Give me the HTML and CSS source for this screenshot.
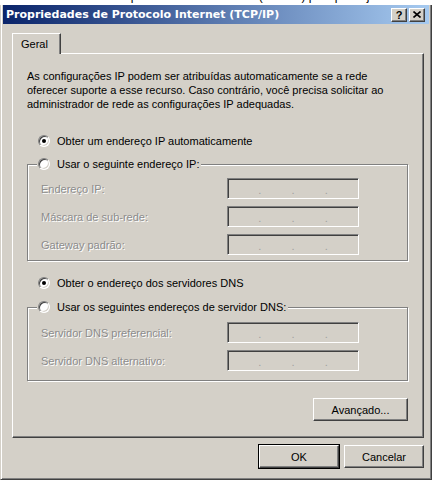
FILE: index.html
```html
<!DOCTYPE html>
<html lang="pt-BR">
<head>
    <meta charset="UTF-8">
    <title>Propriedades de Protocolo Internet (TCP/IP)</title>
    <link rel="stylesheet" href="styles.css">
</head>
<body>
    <div class="backdrop">
        <div class="backdrop-text">Conexão ao Propriedades de rede local (TCP/IP) pela placa ja</div>
    </div>

    <div class="window">
        <div class="titlebar">
            <span class="title">Propriedades de Protocolo Internet (TCP/IP)</span>
            <div class="caption-buttons">
                <button class="cap-btn">?</button>
                <button class="cap-btn">
                    <svg width="8" height="7" viewBox="0 0 8 7"><path d="M0.5 0.5 L7.5 6.5 M7.5 0.5 L0.5 6.5" stroke="#000" stroke-width="1.6" fill="none"/></svg>
                </button>
            </div>
        </div>

        <div class="content">
            <div class="tabs">
                <div class="tab">Geral</div>
            </div>

            <div class="panel">
                <p class="intro">As configurações IP podem ser atribuídas automaticamente se a rede<br>oferecer suporte a esse recurso. Caso contrário, você precisa solicitar ao<br>administrador de rede as configurações IP adequadas.</p>

                <label class="option first"><span class="radio checked"></span>Obter um endereço IP automaticamente</label>

                <div class="group group-ip">
                    <label class="option legend"><span class="radio"></span>Usar o seguinte endereço IP:</label>
                    <div class="fields">
                        <span class="field-label">Endereço IP:</span>
                        <span class="ip-field"><i>.</i><i>.</i><i>.</i></span>
                        <span class="field-label">Máscara de sub-rede:</span>
                        <span class="ip-field"><i>.</i><i>.</i><i>.</i></span>
                        <span class="field-label">Gateway padrão:</span>
                        <span class="ip-field"><i>.</i><i>.</i><i>.</i></span>
                    </div>
                </div>

                <label class="option dns-auto"><span class="radio checked"></span>Obter o endereço dos servidores DNS</label>

                <div class="group group-dns">
                    <label class="option legend"><span class="radio"></span>Usar os seguintes endereços de servidor DNS:</label>
                    <div class="fields">
                        <span class="field-label">Servidor DNS preferencial:</span>
                        <span class="ip-field"><i>.</i><i>.</i><i>.</i></span>
                        <span class="field-label">Servidor DNS alternativo:</span>
                        <span class="ip-field"><i>.</i><i>.</i><i>.</i></span>
                    </div>
                </div>

                <div class="advanced-row">
                    <button class="btn btn-advanced">Avançado...</button>
                </div>
            </div>

            <div class="footer">
                <button class="btn default">OK</button>
                <button class="btn">Cancelar</button>
            </div>
        </div>
    </div>
</body>
</html>
```

FILE: styles.css
```css
body {
    margin: 0;
    background-color: #fff;
    font-family: "Liberation Sans", Arial, sans-serif;
    font-size: 11px;
    color: #000;
}
.backdrop {
    height: 5px;
    overflow: hidden;
}
.backdrop-text {
    margin-top: -11px;
    padding-left: 44px;
    font-size: 12px;
    line-height: 14px;
    white-space: nowrap;
}
.window {
    width: 432px;
    height: 475px;
    box-sizing: border-box;
    background-color: #d4d0c8;
    border-left: 1px solid #d4d0c8;
    border-right: 1px solid #404040;
    border-bottom: 1px solid #404040;
    box-shadow: inset 1px 0 0 #fff, inset -1px -1px 0 #808080;
    padding: 0 2px;
}
.titlebar {
    height: 19px;
    display: flex;
    align-items: center;
    justify-content: space-between;
    background: linear-gradient(to right, #0a246a, #a6caf0);
    padding: 0 4px 0 3px;
}
.title {
    color: #fff;
    font-family: "DejaVu Sans", Verdana, sans-serif;
    font-weight: bold;
    font-size: 11px;
    white-space: nowrap;
}
.caption-buttons {
    display: flex;
    gap: 2px;
}
.cap-btn {
    width: 16px;
    height: 14px;
    padding: 0;
    display: flex;
    align-items: center;
    justify-content: center;
    background-color: #d4d0c8;
    border: 1px solid;
    border-color: #fff #404040 #404040 #fff;
    box-shadow: inset -1px -1px 0 #808080;
    font-family: "Liberation Sans", Arial, sans-serif;
    font-weight: bold;
    font-size: 11px;
    line-height: 12px;
    color: #000;
}
.content {
    padding: 9px 5px 0 9px;
}
.tabs {
    display: flex;
    height: 20px;
}
.tab {
    position: relative;
    z-index: 1;
    width: 49px;
    height: 21px;
    box-sizing: border-box;
    background-color: #d4d0c8;
    border-top: 1px solid #fff;
    border-left: 1px solid #fff;
    border-right: 1px solid #404040;
    box-shadow: inset -1px 0 0 #808080;
    padding: 3px 0 0 8px;
    line-height: 14px;
}
.panel {
    width: 412px;
    height: 385px;
    box-sizing: border-box;
    border: 1px solid;
    border-color: #fff #404040 #404040 #fff;
    box-shadow: inset -1px -1px 0 #808080;
    padding: 15px 15px 0 14px;
}
.intro {
    margin: 0;
    line-height: 14px;
    white-space: nowrap;
}
.option {
    display: flex;
    align-items: center;
    gap: 7px;
    height: 14px;
    line-height: 14px;
    white-space: nowrap;
}
.option.first {
    margin: 23px 0 0 11px;
}
.option.dns-auto {
    margin: 15px 0 0 11px;
}
.radio {
    flex: none;
    width: 12px;
    height: 12px;
    box-sizing: border-box;
    border-radius: 50%;
    border: 1px solid;
    border-color: #808080 #fff #fff #808080;
    background-color: #fff;
    box-shadow: inset 1px 1px 0 #404040, inset -1px -1px 0 #d4d0c8;
    display: flex;
    align-items: center;
    justify-content: center;
}
.radio.checked::after {
    content: "";
    width: 4px;
    height: 4px;
    border-radius: 50%;
    background-color: #000;
}
.group {
    border: 1px solid #808080;
    box-shadow: 1px 1px 0 #fff, inset 1px 1px 0 #fff;
}
.group-ip {
    margin-top: 16px;
    padding-bottom: 5px;
}
.group-dns {
    margin-top: 17px;
    padding-bottom: 9px;
}
.group .legend {
    width: max-content;
    margin: -8px 0 0 9px;
    padding: 0 2px 0 1px;
    background-color: #d4d0c8;
}
.fields {
    display: grid;
    grid-template-columns: 186px 132px;
    grid-auto-rows: 21px;
    row-gap: 7px;
    align-items: center;
    margin-top: 7px;
    padding-left: 13px;
}
.group-dns .fields {
    margin-top: 8px;
}
.field-label {
    color: #8c8c8c;
    text-shadow: 1px 1px 0 #fff;
    white-space: nowrap;
}
.ip-field {
    height: 21px;
    box-sizing: border-box;
    border: 1px solid;
    border-color: #808080 #fff #fff #808080;
    box-shadow: inset 1px 1px 0 #404040;
    display: flex;
    justify-content: space-evenly;
    align-items: center;
    padding-top: 2px;
}
.ip-field i {
    font-style: normal;
    color: #a0a0a0;
    line-height: 12px;
}
.advanced-row {
    display: flex;
    justify-content: flex-end;
    margin-top: 17px;
}
.btn {
    width: 80px;
    height: 23px;
    padding: 0;
    background-color: #d4d0c8;
    border: 1px solid;
    border-color: #fff #404040 #404040 #fff;
    box-shadow: inset -1px -1px 0 #808080;
    font-family: "Liberation Sans", Arial, sans-serif;
    font-size: 11px;
    color: #000;
}
.btn-advanced {
    width: 95px;
}
.btn.default {
    outline: 1px solid #000;
}
.footer {
    display: flex;
    justify-content: flex-end;
    gap: 5px;
    margin-top: 7px;
}
```
